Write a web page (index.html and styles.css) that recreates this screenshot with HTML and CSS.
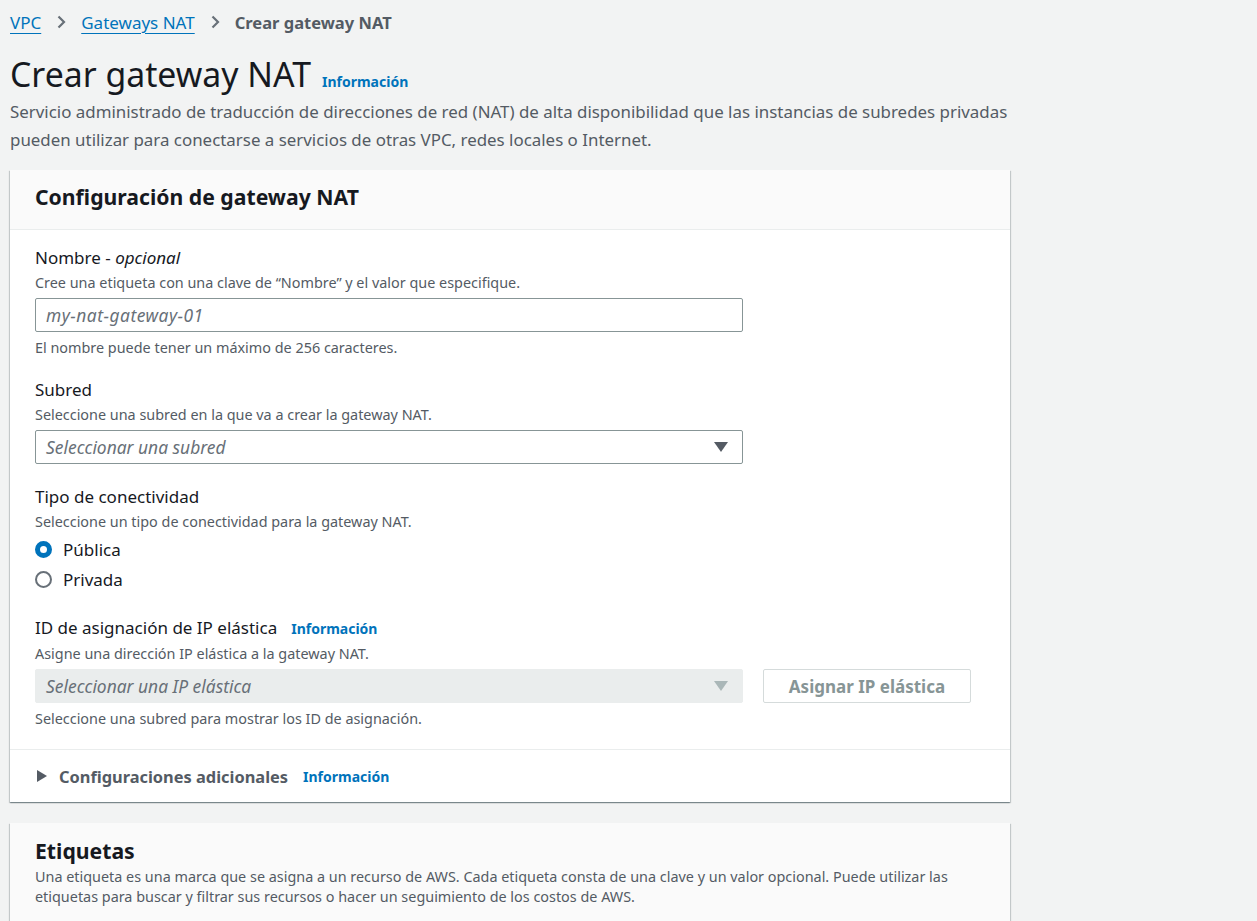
FILE: index.html
```html
<!DOCTYPE html>
<html lang="es">
<head>
<meta charset="utf-8">
<title>Crear gateway NAT</title>
<link rel="stylesheet" href="styles.css">
</head>
<body>
<div class="page">
  <nav class="crumbs">
    <a class="crumb-link" href="#">VPC</a>
    <svg class="chev" width="16" height="16" viewBox="0 0 16 16"><path d="M5.5 2.5 L11 8 L5.5 13.5" fill="none" stroke="#687078" stroke-width="2.2"/></svg>
    <a class="crumb-link" href="#">Gateways NAT</a>
    <svg class="chev" width="16" height="16" viewBox="0 0 16 16"><path d="M5.5 2.5 L11 8 L5.5 13.5" fill="none" stroke="#687078" stroke-width="2.2"/></svg>
    <span class="crumb-current">Crear gateway NAT</span>
  </nav>

  <header class="page-head">
    <div class="title-row">
      <h1 class="title">Crear gateway NAT</h1>
      <a class="info" href="#">Información</a>
    </div>
    <p class="lead">Servicio administrado de traducción de direcciones de red (NAT) de alta disponibilidad que las instancias de subredes privadas pueden utilizar para conectarse a servicios de otras VPC, redes locales o Internet.</p>
  </header>

  <section class="panel">
    <div class="panel-head">
      <h2 class="panel-title">Configuración de gateway NAT</h2>
    </div>
    <div class="panel-body">
      <div class="field">
        <div class="label">Nombre - <em>opcional</em></div>
        <div class="desc">Cree una etiqueta con una clave de “Nombre” y el valor que especifique.</div>
        <div class="input"><span class="placeholder ph-name">my-nat-gateway-01</span></div>
        <div class="hint">El nombre puede tener un máximo de 256 caracteres.</div>
      </div>

      <div class="field">
        <div class="label">Subred</div>
        <div class="desc">Seleccione una subred en la que va a crear la gateway NAT.</div>
        <div class="input select"><span class="placeholder">Seleccionar una subred</span>
          <svg class="caret" width="14" height="10" viewBox="0 0 14 10"><path d="M0 0 H14 L7 10 Z" fill="#545b64"/></svg>
        </div>
      </div>

      <div class="field field-tipo">
        <div class="label">Tipo de conectividad</div>
        <div class="desc">Seleccione un tipo de conectividad para la gateway NAT.</div>
        <div class="radios">
          <div class="radio"><span class="dot on"></span><span>Pública</span></div>
          <div class="radio"><span class="dot"></span><span>Privada</span></div>
        </div>
      </div>

      <div class="field field-ip">
        <div class="label label-row"><span>ID de asignación de IP elástica</span><a class="info info-sm" href="#">Información</a></div>
        <div class="desc">Asigne una dirección IP elástica a la gateway NAT.</div>
        <div class="row">
          <div class="input select disabled"><span class="placeholder">Seleccionar una IP elástica</span>
            <svg class="caret" width="14" height="10" viewBox="0 0 14 10"><path d="M0 0 H14 L7 10 Z" fill="#aab7b8"/></svg>
          </div>
          <div class="btn">Asignar IP elástica</div>
        </div>
        <div class="hint">Seleccione una subred para mostrar los ID de asignación.</div>
      </div>
    </div>
    <div class="expander">
      <svg class="tri" width="10" height="12" viewBox="0 0 10 12"><path d="M0 0 L10 6 L0 12 Z" fill="#545b64"/></svg>
      <span class="exp-title">Configuraciones adicionales</span>
      <a class="info info-sm" href="#">Información</a>
    </div>
  </section>

  <section class="panel panel-tags">
    <div class="panel-head tags-head">
      <h2 class="panel-title">Etiquetas</h2>
      <p class="tags-desc">Una etiqueta es una marca que se asigna a un recurso de AWS. Cada etiqueta consta de una clave y un valor opcional. Puede utilizar las etiquetas para buscar y filtrar sus recursos o hacer un seguimiento de los costos de AWS.</p>
    </div>
  </section>
</div>
</body>
</html>
```

FILE: styles.css
```css
* { box-sizing: border-box; }
html, body { margin: 0; padding: 0; }
body {
  background: #f2f3f3;
  font-family: "Noto Sans", "Open Sans", "Liberation Sans", sans-serif;
  color: #16191f;
  font-size: 16px;
  overflow: hidden;
  height: 921px;
}
.page {
  width: 1010px;
  padding: 10px 0 0 10px;
  box-sizing: content-box;
}
.crumbs {
  display: flex;
  align-items: center;
  gap: 12px;
  height: 24px;
  font-size: 17px;
}
.crumb-link {
  color: #0073bb;
  text-decoration: underline;
  text-underline-offset: 4px;
  text-decoration-thickness: 1px;
}
.chev { display: block; }
.crumb-current { color: #545b64; font-weight: 700; font-size: 16.5px; }

.page-head { margin-top: 20px; }
.title-row {
  display: flex;
  align-items: baseline;
  gap: 11px;
  height: 40px;
}
.title {
  margin: 0;
  font-size: 33.8px;
  font-weight: 400;
  line-height: 40px;
  color: #16191f;
}
.info {
  color: #0073bb;
  font-size: 14px;
  font-weight: 700;
  text-decoration: none;
}
.lead {
  margin: 4px 0 0;
  font-size: 16.9px;
  line-height: 28px;
  color: #545b64;
  width: 1010px;
}

.panel {
  margin-top: 16px;
  width: 1000px;
  background: #fff;
  box-shadow: 0 1px 1px 0 rgba(0,28,36,.3), 1px 1px 1px 0 rgba(0,28,36,.15), -1px 1px 1px 0 rgba(0,28,36,.15);
}
.panel-head {
  background: #fafafa;
  border-bottom: 1px solid #eaeded;
  padding: 12px 25px 17px;
}
.panel-title {
  margin: 0;
  font-size: 21.2px;
  font-weight: 700;
  line-height: 30px;
}
.panel-body {
  padding: 16px 25px 20px;
  display: flex;
  flex-direction: column;
  gap: 20px;
}
.field { display: flex; flex-direction: column; }
.field-tipo { margin-top: 1px; }
.field-ip { margin-top: 2px; }
.label { font-size: 17px; line-height: 24px; color: #16191f; }
.label em { font-style: italic; }
.label-row { display: flex; align-items: baseline; }
.desc { font-size: 14.4px; line-height: 20px; color: #545b64; margin-top: 3px; margin-bottom: 5px; }
.hint { font-size: 14.4px; line-height: 20px; color: #545b64; margin-top: 6px; }
.input {
  width: 708px;
  height: 34px;
  border: 1px solid #879596;
  border-radius: 2px;
  background: #fff;
  display: flex;
  align-items: center;
  padding: 0 10px;
}
.placeholder { font-style: italic; color: #687078; font-size: 17.4px; }
.ph-name { letter-spacing: 0.5px; }
.select { justify-content: space-between; padding-right: 14px; }
.caret { display: block; }
.disabled { background: #eaeded; border-color: #eaeded; }

.radios { display: flex; flex-direction: column; margin-top: -3px; }
.radio { display: flex; align-items: center; gap: 11px; height: 30px; font-size: 17px; }
.dot {
  width: 17px; height: 17px; border-radius: 50%;
  border: 2px solid #687078;
  background: #fff;
  display: block;
}
.dot.on {
  border: 5px solid #0073bb;
}

.info-sm { margin-left: 14px; }
.row { display: flex; gap: 20px; align-items: center; }
.btn {
  width: 208px;
  height: 34px;
  border: 1px solid #d5dbdb;
  border-radius: 2px;
  background: #fff;
  color: #879596;
  font-weight: 700;
  font-size: 17px;
  display: flex;
  align-items: center;
  justify-content: center;
}

.expander {
  border-top: 1px solid #eaeded;
  height: 53px;
  display: flex;
  align-items: center;
  padding: 0 25px 0 27px;
}
.tri { display: block; margin-right: 12px; }
.exp-title { font-weight: 700; color: #545b64; font-size: 16.4px; }
.expander .info-sm { margin-left: 15px; }

.panel-tags { margin-top: 21px; }
.tags-head { border-bottom: none; padding-top: 13px; padding-bottom: 30px; }
.tags-desc {
  margin: 1px 0 0;
  font-size: 14.4px;
  line-height: 20px;
  color: #545b64;
  width: 950px;
}
```
